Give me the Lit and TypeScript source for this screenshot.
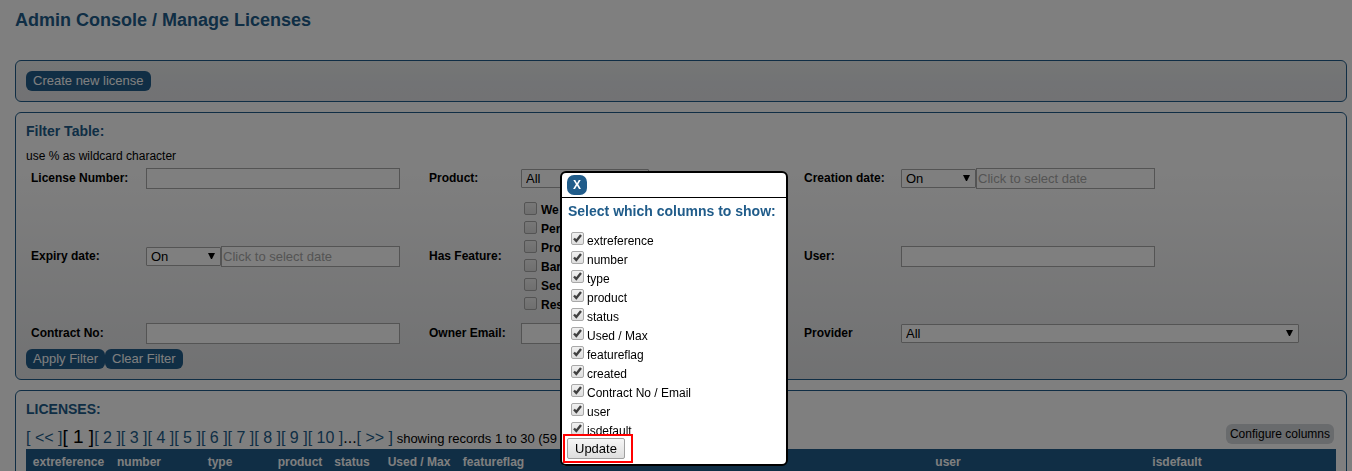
import { LitElement, html, css } from "lit";
import { customElement } from "lit/decorators.js";
import { classMap } from "lit/directives/class-map.js";

const FEATURES = ["We", "Per", "Pro", "Bar", "Sec", "Res"].map((label, i) => ({
  id: `feature-${i}`,
  label,
}));

const COLUMNS = [
  { name: "extreference", width: 85 },
  { name: "number", width: 56 },
  { name: "type", width: 106 },
  { name: "product", width: 54 },
  { name: "status", width: 50 },
  { name: "Used / Max", width: 84 },
  { name: "featureflag", width: 65 },
  { name: "created", width: 114 },
  { name: "Contract No / Email", width: 238, lead: true },
  { name: "user", width: 140 },
  { name: "isdefault", width: 318 },
];
const TOTAL = COLUMNS.reduce((sum, c) => sum + c.width, 0);

const PAGES = [2, 3, 4, 5, 6, 7, 8, 9, 10];

@customElement("app-root")
export class AppRoot extends LitElement {
  static styles = css`
    :host {
      display: block;
      height: 100vh;
      overflow: hidden;
      background: #fff;
      color: #000;
      font: 12px/16px "Liberation Sans", Arial, sans-serif;
    }
    * {
      box-sizing: border-box;
    }
    button,
    input,
    select {
      margin: 0;
      font-family: inherit;
    }
    h1,
    h2,
    p {
      margin: 0;
    }
    h1,
    h2 {
      color: #205c8a;
    }
    h1 {
      font-size: 18px;
      line-height: 20px;
    }
    h2 {
      font-size: 14px;
      line-height: 16px;
    }
    .page {
      display: flex;
      flex-direction: column;
      gap: 10px;
      padding: 10px 5px 0 15px;
    }
    .title {
      margin-bottom: 20px;
    }
    .panel {
      border: 1px solid #205c8a;
      border-radius: 6px;
      padding: 10px;
    }
    .toolbar {
      display: flex;
      background: linear-gradient(#ebeeec, #e4e6ea 60%, #e4e5e8);
    }
    .filter {
      background: linear-gradient(#fff 20%, #e2e3e5);
    }
    .pill {
      height: 20px;
      padding: 0 7px;
      border: 0;
      border-radius: 6px;
      background: #205c8a;
      color: #fff;
      font-size: 13px;
      line-height: 20px;
      white-space: nowrap;
    }
    .hint {
      margin: 9px 0 4px;
    }
    .fields {
      display: grid;
      grid-template-columns: 115px 283fr 92px 283fr 97px 398fr;
      row-gap: 10px;
      align-items: center;
      padding: 0 37px 0 5px;
      font-weight: bold;
    }
    .name {
      padding-bottom: 1px;
    }
    .text,
    .select {
      border: 1px solid #a9a9a9;
      background-color: #fff;
      color: #000;
      font-size: 13px;
    }
    .text {
      width: 254px;
      height: 21px;
      padding: 0 1px;
    }
    .text::placeholder {
      color: #a9a9a9;
      opacity: 1;
    }
    .select {
      appearance: none;
      width: 128px;
      height: 19px;
      padding: 0 4px;
      border-radius: 1px;
      background-image: url("data:image/svg+xml,%3Csvg xmlns='http://www.w3.org/2000/svg' width='7' height='7'%3E%3Cpath d='M0 0h7L4 6H3z'/%3E%3C/svg%3E");
      background-repeat: no-repeat;
      background-position: right 5px center;
    }
    .select.wide {
      width: 100%;
    }
    .date {
      display: flex;
      align-items: center;
      width: 254px;
    }
    .date .select {
      width: 75px;
      flex: none;
    }
    .date .text {
      flex: 1;
      min-width: 0;
    }
    .check {
      display: flex;
      align-items: center;
      gap: 4px;
      height: 19px;
      padding: 0 3px;
    }
    .check label {
      padding-top: 3px;
    }
    .box {
      appearance: none;
      flex: none;
      width: 13px;
      height: 13px;
      border: 1px solid #a8a8a8;
      border-radius: 2px;
      background: linear-gradient(#f0f0f0, #dedede);
    }
    .box:checked {
      background:
        url("data:image/svg+xml,%3Csvg xmlns='http://www.w3.org/2000/svg' width='11' height='11'%3E%3Cpath d='M2 5.5 4.3 8 9 2' fill='none' stroke='%23404040' stroke-width='2.4'/%3E%3C/svg%3E") center no-repeat,
        linear-gradient(#f0f0f0, #dedede);
    }
    .actions {
      display: flex;
      margin-top: 5px;
    }
    .licenses {
      padding-bottom: 40px;
    }
    .pagerbar {
      display: flex;
      align-items: flex-start;
      justify-content: space-between;
      height: 25px;
      margin-top: 7px;
      padding-right: 2px;
    }
    .pager {
      font-size: 16px;
      line-height: 26px;
      white-space: pre;
    }
    .pager a {
      color: #205c8a;
      text-decoration: none;
    }
    .current {
      font-size: 19px;
    }
    .count {
      font-size: 13px;
    }
    .configure {
      height: 20px;
      padding: 0 4px;
      border: 0;
      border-radius: 6px;
      background: #d3d6da;
      color: #000;
      font-size: 12px;
      line-height: 20px;
    }
    .table {
      width: 100%;
      table-layout: fixed;
      border-collapse: collapse;
    }
    .table th {
      height: 26px;
      padding: 0;
      background: #205c8a;
      color: #fff;
      text-align: center;
      white-space: nowrap;
    }
    .table th.lead {
      text-align: left;
    }
    .overlay {
      position: fixed;
      inset: 0;
      display: flex;
      align-items: flex-end;
      justify-content: center;
      padding: 0 4px 5px 0;
      background: rgba(0, 0, 0, 0.5);
    }
    .dialog {
      width: 228px;
      border: 2px solid #000;
      border-radius: 6px;
      background: #fff;
    }
    .dialoghead {
      display: flex;
      padding: 2px 5px;
      border-bottom: 1px solid #000;
    }
    .close {
      width: 20px;
      height: 20px;
      padding: 0;
      border: 0;
      border-radius: 7px;
      background: #205c8a;
      color: #fff;
      font-size: 12px;
      font-weight: bold;
    }
    .dialog h2 {
      padding: 5px 6px 8px;
      white-space: nowrap;
    }
    .list {
      max-height: 207px;
      padding: 2px 6px 0;
      overflow: hidden;
    }
    .list .check {
      gap: 3px;
    }
    .list label {
      padding-top: 5px;
    }
    .update {
      display: inline-block;
      margin: 0 1px 1px;
      border: 2px solid #f00;
      padding: 2px 6px 2px 2px;
    }
    .update button {
      display: block;
      height: 21px;
      padding: 0 7px;
      border: 1px solid #a0a0a0;
      border-radius: 2px;
      background: linear-gradient(#f6f6f6, #dedede);
      color: #000;
      font-size: 13px;
    }
  `;

  private dateField(id: string) {
    return html`<div class="date">
      <select class="select" aria-label="Date comparison"><option>On</option></select>
      <input class="text" id=${id} type="text" placeholder="Click to select date" />
    </div>`;
  }

  render() {
    return html`
      <main class="page">
        <h1 class="title">Admin Console / Manage Licenses</h1>
        <section class="panel toolbar"><button class="pill">Create new license</button></section>
        <section class="panel filter">
          <h2>Filter Table:</h2>
          <p class="hint">use % as wildcard character</p>
          <div class="fields">
            <label class="name" for="number">License Number:</label>
            <input class="text" id="number" type="text" />
            <label class="name" for="product">Product:</label>
            <select class="select" id="product"><option>All</option></select>
            <label class="name" for="created">Creation date:</label>
            ${this.dateField("created")}
            <label class="name" for="expiry">Expiry date:</label>
            ${this.dateField("expiry")}
            <span class="name">Has Feature:</span>
            <div>
              ${FEATURES.map(
                (f) => html`<div class="check">
                  <input class="box" type="checkbox" id=${f.id} /><label for=${f.id}>${f.label}</label>
                </div>`
              )}
            </div>
            <label class="name" for="user">User:</label>
            <input class="text" id="user" type="text" />
            <label class="name" for="contract">Contract No:</label>
            <input class="text" id="contract" type="text" />
            <label class="name" for="email">Owner Email:</label>
            <input class="text" id="email" type="text" />
            <label class="name" for="provider">Provider</label>
            <select class="select wide" id="provider"><option>All</option></select>
          </div>
          <div class="actions">
            <button class="pill">Apply Filter</button><button class="pill">Clear Filter</button>
          </div>
        </section>
        <section class="panel licenses">
          <h2>LICENSES:</h2>
          <div class="pagerbar">
            <nav class="pager"><a href="#">[ &lt;&lt; ]</a><span class="current">[ 1 ]</span>${PAGES.map(
                (n) => html`<a href="#">[ ${n} ]</a>`
              )}...<a href="#">[ &gt;&gt; ]</a><span class="count"> showing records 1 to 30 (59</span></nav>
            <button class="configure">Configure columns</button>
          </div>
          <table class="table">
            <colgroup>
              ${COLUMNS.map((c) => html`<col style="width:${(c.width / TOTAL) * 100}%" />`)}
            </colgroup>
            <thead>
              <tr>
                ${COLUMNS.map((c) => html`<th scope="col" class=${classMap({ lead: !!c.lead })}>${c.name}</th>`)}
              </tr>
            </thead>
          </table>
        </section>
      </main>
      <div class="overlay">
        <div class="dialog" role="dialog" aria-labelledby="dialog-title">
          <div class="dialoghead"><button class="close" aria-label="Close">X</button></div>
          <h2 id="dialog-title">Select which columns to show:</h2>
          <div class="list">
            ${COLUMNS.map(
              (c, i) => html`<div class="check">
                <input class="box" type="checkbox" id="col-${i}" checked /><label for="col-${i}">${c.name}</label>
              </div>`
            )}
          </div>
          <div class="update"><button>Update</button></div>
        </div>
      </div>
    `;
  }
}
